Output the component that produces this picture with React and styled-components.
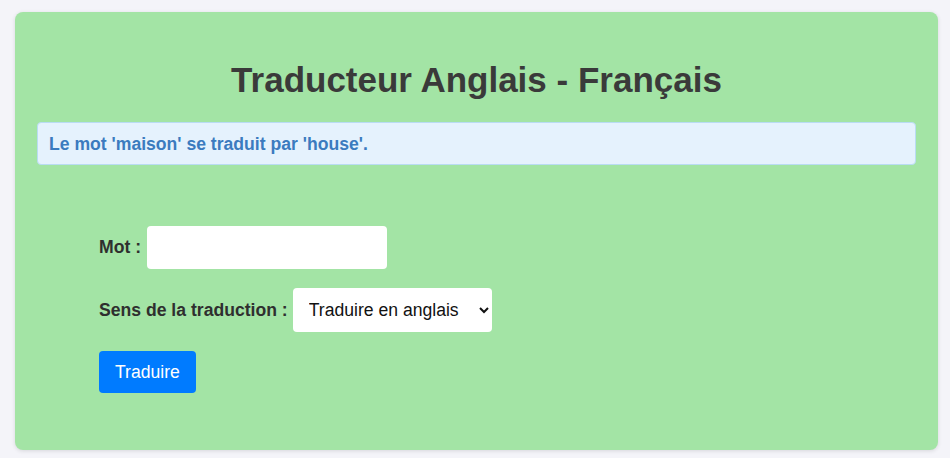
import React from "react";
import styled, { createGlobalStyle } from "styled-components";

const Global = createGlobalStyle`
  html, body { margin: 0; padding: 0; background: #f4f4f9; }
  body { font-family: "Liberation Sans", Arial, sans-serif; }
  * { box-sizing: border-box; }
`;

const Page = styled.div`
  padding: 12px 12px 8px 15px;
`;

const Card = styled.div`
  background: #a3e4a5;
  border-radius: 8px;
  box-shadow: 0 1px 4px rgba(0, 0, 0, 0.12);
  padding: 22px 22px 57px;
  height: 438px;
`;

const Title = styled.h1`
  margin: 26px 0 22px;
  font-size: 35px;
  line-height: 40px;
  font-weight: 700;
  color: #3a3a3a;
  text-align: center;
`;

const Alert = styled.div`
  background: #e5f2fd;
  border: 1px solid #b9dcf3;
  border-radius: 4px;
  padding: 11px 11px 9px;
  height: 43px;
  color: #3b7bbf;
  font-weight: 700;
  font-size: 17.6px;
  line-height: 21px;
`;

const Form = styled.form`
  display: flex;
  flex-direction: column;
  align-items: flex-start;
  gap: 19px;
  padding: 61px 62px 0;
`;

const Row = styled.div`
  display: flex;
  align-items: center;
  gap: ${(p) => p.$gap || 6}px;
`;

const Label = styled.label`
  font-weight: 700;
  font-size: 17.6px;
  color: #2f2f2f;
`;

const Input = styled.input`
  width: 240px;
  height: 43px;
  border: none;
  border-radius: 4px;
  background: #fff;
  padding: 8px 10px;
  font-size: 17.6px;
  font-family: inherit;
  outline: none;
`;

const Select = styled.select`
  width: 199px;
  height: 44px;
  border: none;
  border-radius: 4px;
  background: #fff;
  padding: 0 8px 0 12px;
  font-size: 17.6px;
  font-family: inherit;
  color: #111;
  outline: none;
`;

const Button = styled.button`
  height: 42px;
  padding: 0 16px;
  border: none;
  border-radius: 4px;
  background: #007bff;
  color: #fff;
  font-size: 17.6px;
  font-family: inherit;
  cursor: pointer;
`;

export default function App() {
  return (
    <Page>
      <Global />
      <Card>
        <Title>Traducteur Anglais - Français</Title>
        <Alert>Le mot 'maison' se traduit par 'house'.</Alert>
        <Form onSubmit={(e) => e.preventDefault()}>
          <Row>
            <Label htmlFor="mot">Mot :</Label>
            <Input id="mot" type="text" />
          </Row>
          <Row $gap={5}>
            <Label htmlFor="sens">Sens de la traduction :</Label>
            <Select id="sens" defaultValue="en">
              <option value="en">Traduire en anglais</option>
              <option value="fr">Traduire en français</option>
            </Select>
          </Row>
          <Button type="submit">Traduire</Button>
        </Form>
      </Card>
    </Page>
  );
}
